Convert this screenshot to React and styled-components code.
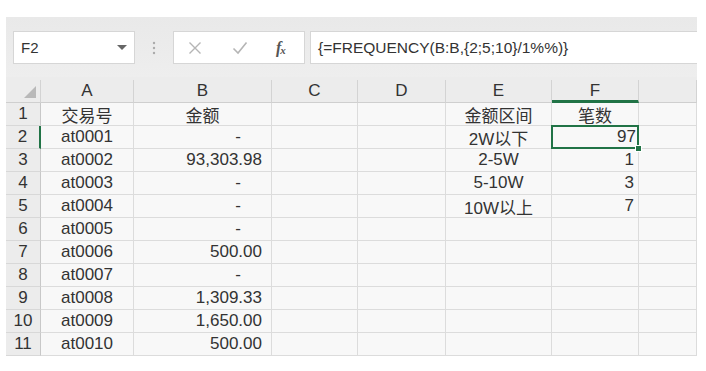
import React from "react";
import styled, { createGlobalStyle } from "styled-components";

const Global = createGlobalStyle`
  html, body { margin: 0; padding: 0; background: #ffffff; }
  body { font-family: "Liberation Sans", "Noto Sans CJK SC", sans-serif; }
`;

const Frame = styled.div`
  margin: 17px 0 0 6px;
  width: 691px;
  background: #ececec;
  display: flex;
  flex-direction: column;
`;

const Toolbar = styled.div`
  height: 60px;
  box-sizing: border-box;
  padding: 14px 0 0 7px;
  display: flex;
  align-items: flex-start;
  background: linear-gradient(#e9e9e9, #eeeeee);
`;

const NameBox = styled.div`
  width: 122px;
  height: 33px;
  box-sizing: border-box;
  background: #fff;
  border: 1px solid #d6d6d6;
  display: flex;
  align-items: center;
  justify-content: space-between;
  padding: 0 7px 0 7px;
  font-size: 15px;
  color: #333;
`;

const Divider = styled.div`
  width: 38px;
  height: 33px;
  display: flex;
  align-items: center;
  justify-content: center;
`;

const ButtonBox = styled.div`
  width: 132px;
  height: 33px;
  box-sizing: border-box;
  background: #fff;
  border: 1px solid #d6d6d6;
  display: flex;
  align-items: center;
  padding: 0 0 0 14px;
`;

const IconSlot = styled.div`
  width: ${(p) => p.w}px;
  display: flex;
  align-items: center;
`;

const Fx = styled.span`
  font-family: "Liberation Serif", serif;
  font-style: italic;
  font-weight: bold;
  font-size: 16px;
  color: #555;
  letter-spacing: -1px;
  sub { font-size: 11px; vertical-align: -1px; }
`;

const FormulaInput = styled.div`
  margin-left: 5px;
  flex: 1;
  height: 33px;
  box-sizing: border-box;
  background: #fff;
  border: 1px solid #d6d6d6;
  border-right: none;
  display: flex;
  align-items: center;
  padding-left: 7px;
  font-size: 15.5px;
  color: #333;
`;

const Sheet = styled.div`
  margin-top: 3px;
  display: grid;
  grid-template-columns: 35px 93px 138px 86px 88px 106px 87px 58px;
  grid-auto-rows: 23px;
  background: #f8f8f8;
`;

const Head = styled.div`
  box-sizing: border-box;
  background: #ececec;
  border-right: 1px solid #d3d3d3;
  border-bottom: ${(p) => (p.active ? "3px solid #217346" : "1px solid #cfcfcf")};
  display: flex;
  align-items: center;
  justify-content: center;
  font-size: 17px;
  color: #333;
  padding-top: ${(p) => (p.active ? "2px" : "0")};
`;

const Corner = styled(Head)`
  justify-content: flex-end;
  align-items: flex-end;
  padding: 0 4px 4px 0;
`;

const RowHead = styled.div`
  box-sizing: border-box;
  background: #ececec;
  border-right: ${(p) => (p.active ? "2px solid #217346" : "1px solid #c8c8c8")};
  border-bottom: 1px solid #d8d8d8;
  display: flex;
  align-items: center;
  justify-content: center;
  font-size: 17px;
  color: #333;
`;

const Cell = styled.div`
  box-sizing: border-box;
  border-right: 1px solid #dcdcdc;
  border-bottom: 1px solid #dcdcdc;
  display: flex;
  align-items: center;
  justify-content: ${(p) =>
    p.align === "right" ? "flex-end" : p.align === "center" ? "center" : "flex-start"};
  padding: ${(p) => (p.align === "right" ? `0 ${p.pr ?? 8}px 0 0` : "0")};
  font-size: 17px;
  color: #333;
  white-space: nowrap;
  position: relative;
  ${(p) =>
    p.selected &&
    `
    box-shadow: inset 0 0 0 2px #217346;
    margin: -1px 0 0 -1px;
    border: none;
    padding-right: 3px;
    z-index: 2;
  `}
`;

const Handle = styled.span`
  position: absolute;
  right: -3px;
  bottom: -3px;
  width: 7px;
  height: 7px;
  background: #217346;
  border: 1px solid #fff;
  box-sizing: border-box;
`;

const cols = ["A", "B", "C", "D", "E", "F", ""];

const rows = [
  ["交易号", "金额", "", "", "金额区间", "笔数"],
  ["at0001", "-", "", "", "2W以下", "97"],
  ["at0002", "93,303.98", "", "", "2-5W", "1"],
  ["at0003", "-", "", "", "5-10W", "3"],
  ["at0004", "-", "", "", "10W以上", "7"],
  ["at0005", "-", "", "", "", ""],
  ["at0006", "500.00", "", "", "", ""],
  ["at0007", "-", "", "", "", ""],
  ["at0008", "1,309.33", "", "", "", ""],
  ["at0009", "1,650.00", "", "", "", ""],
  ["at0010", "500.00", "", "", "", ""],
];

export default function App() {
  return (
    <>
      <Global />
      <Frame>
        <Toolbar>
          <NameBox>
            <span>F2</span>
            <svg width="10" height="6" viewBox="0 0 10 6">
              <path d="M0 0 L10 0 L5 5 Z" fill="#666" />
            </svg>
          </NameBox>
          <Divider>
            <svg width="4" height="14" viewBox="0 0 4 14">
              <circle cx="2" cy="2" r="1.2" fill="#aaa" />
              <circle cx="2" cy="7" r="1.2" fill="#aaa" />
              <circle cx="2" cy="12" r="1.2" fill="#aaa" />
            </svg>
          </Divider>
          <ButtonBox>
            <IconSlot w={44}>
              <svg width="14" height="14" viewBox="0 0 14 14">
                <path d="M1.5 1.5 L12.5 12.5 M12.5 1.5 L1.5 12.5" stroke="#b5b5b5" strokeWidth="1.4" fill="none" />
              </svg>
            </IconSlot>
            <IconSlot w={44}>
              <svg width="16" height="14" viewBox="0 0 16 14">
                <path d="M1.5 7.5 L6 12 L14.5 1.5" stroke="#b5b5b5" strokeWidth="1.6" fill="none" />
              </svg>
            </IconSlot>
            <IconSlot w={28}>
              <Fx>f<sub>x</sub></Fx>
            </IconSlot>
          </ButtonBox>
          <FormulaInput>{"{=FREQUENCY(B:B,{2;5;10}/1%%)}"}</FormulaInput>
        </Toolbar>
        <Sheet>
          <Corner>
            <svg width="12" height="12" viewBox="0 0 12 12">
              <path d="M12 0 L12 12 L0 12 Z" fill="#b9b9b9" />
            </svg>
          </Corner>
          {cols.map((c, i) => (
            <Head key={i} active={c === "F"}>
              {c}
            </Head>
          ))}
          {rows.map((r, i) => (
            <React.Fragment key={i}>
              <RowHead active={i === 1}>{i + 1}</RowHead>
              <Cell align="center">{r[0]}</Cell>
              {i === 0 ? (
                <Cell align="center">{r[1]}</Cell>
              ) : (
                <Cell align="right" pr={r[1] === "-" ? 30 : 9}>
                  {r[1]}
                </Cell>
              )}
              <Cell />
              <Cell />
              <Cell align="center">{r[4]}</Cell>
              {i === 0 ? (
                <Cell align="center">{r[5]}</Cell>
              ) : (
                <Cell align="right" pr={4} selected={i === 1}>
                  {r[5]}
                  {i === 1 && <Handle />}
                </Cell>
              )}
              <Cell />
            </React.Fragment>
          ))}
        </Sheet>
      </Frame>
    </>
  );
}
